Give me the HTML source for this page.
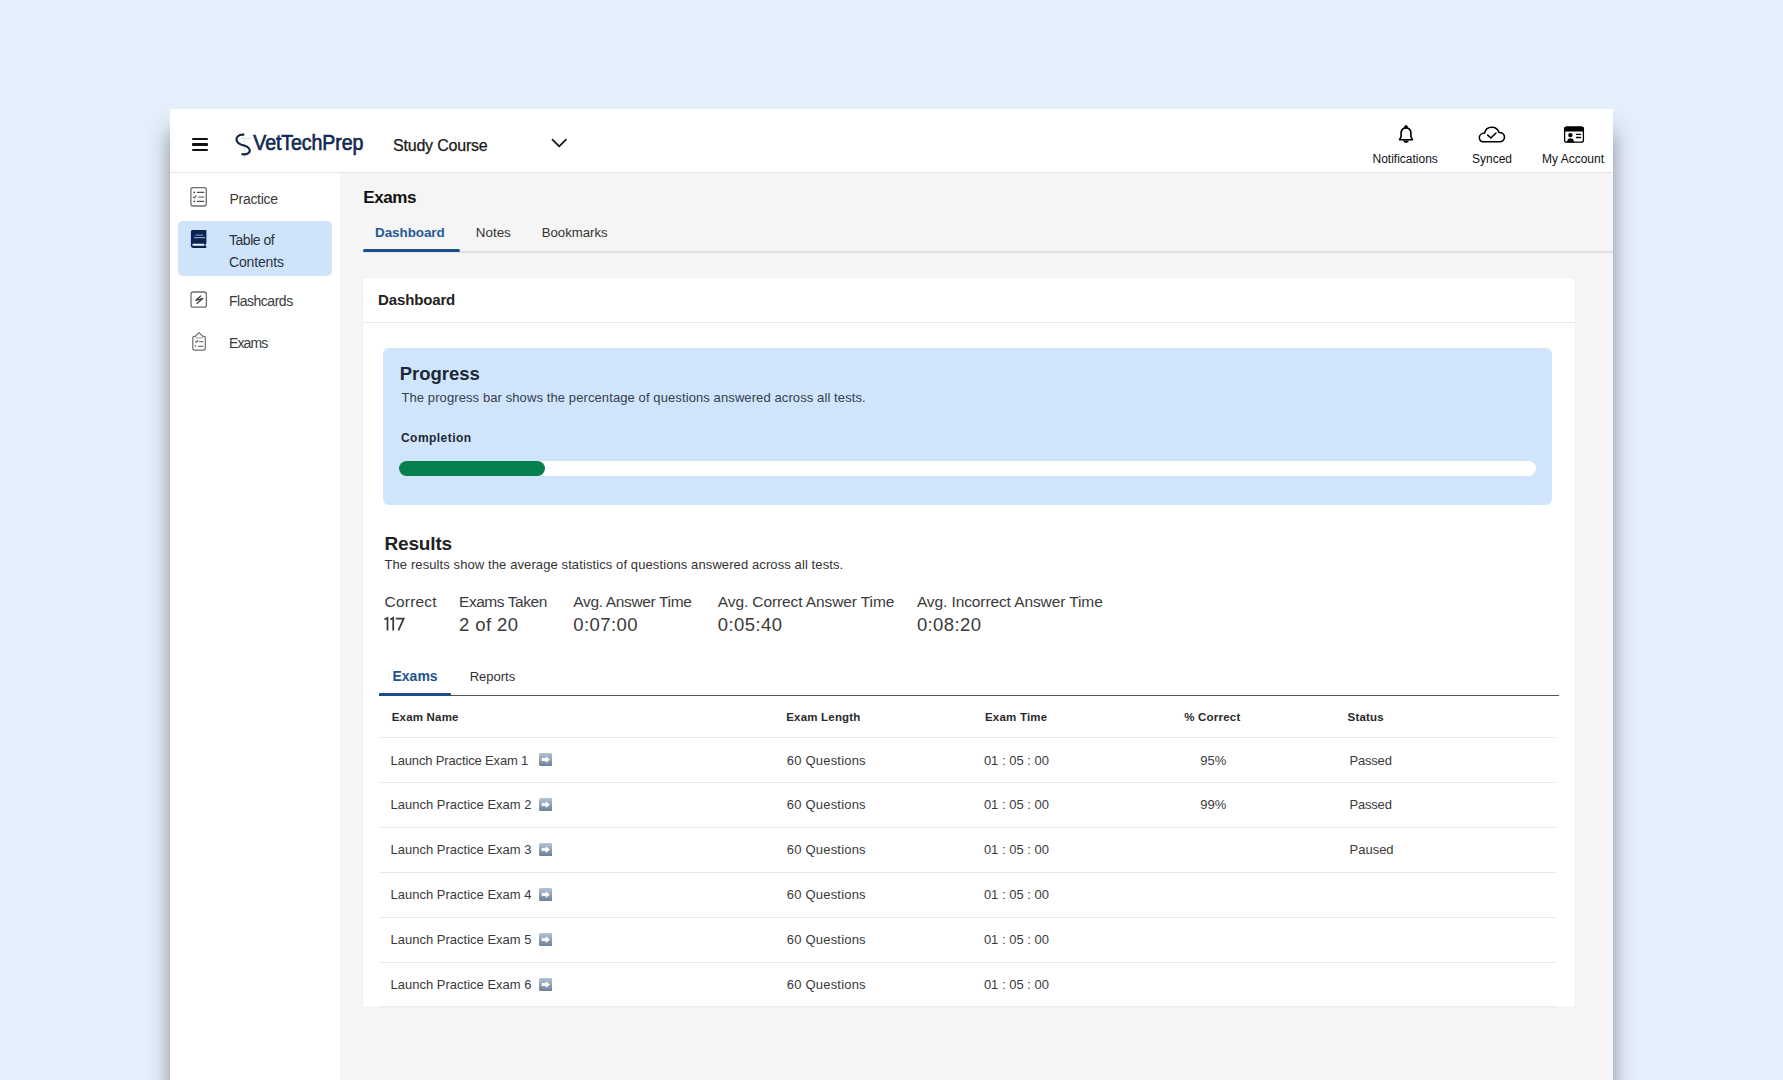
<!DOCTYPE html>
<html><head><meta charset="utf-8">
<style>
*{margin:0;padding:0;box-sizing:border-box}
html,body{width:1783px;height:1080px;overflow:hidden;background:#e5effb;font-family:"Liberation Sans",sans-serif;}
.a{position:absolute;white-space:nowrap;line-height:1}
#win{position:absolute;left:170px;top:109px;width:1443px;height:1000px;background:#fff;box-shadow:0 22px 20px rgba(0,5,15,0.42);overflow:hidden}
#hdr{position:absolute;left:0;top:0;width:1443px;height:64px;background:#fff;border-bottom:1px solid #e6e6e6}
#side{position:absolute;left:0;top:64px;width:170px;height:1000px;background:#fff}
#main{position:absolute;left:170px;top:64px;width:1273px;height:1000px;background:#f5f5f5}
.b{font-weight:bold}
</style></head><body>
<div id="win">
  <div id="hdr"></div>
  <div id="side"></div>
  <div id="main"></div>
</div>

<!-- HEADER -->
<div class="a" style="left:192px;top:138px;width:16px;height:2.4px;background:#111;border-radius:1px"></div>
<div class="a" style="left:192px;top:143.3px;width:16px;height:2.4px;background:#111;border-radius:1px"></div>
<div class="a" style="left:192px;top:148.6px;width:16px;height:2.4px;background:#111;border-radius:1px"></div>
<svg class="a" style="left:230px;top:125px" width="30" height="40" viewBox="230 125 30 40">
 <path d="M241 138.2 H251.5" stroke="#d6dae0" stroke-width="1.1"/>
 <path d="M244.5 139 V159" stroke="#dfe2e7" stroke-width="1.1"/>
 <path d="M243.5 134.6 C238.5 134.3 235.8 137.2 236.6 140.4 C237.4 143.4 240.8 144.6 244.2 145.6 C248.6 147 250.6 149.4 249.6 151.8 C248.6 153.9 245.4 154.6 242.2 154.2" fill="none" stroke="#0f2445" stroke-width="2.1" stroke-linecap="round"/>
</svg>
<div class="a" style="left:253.3px;top:131.9px;font-size:19.6px;color:#102a52;letter-spacing:-0.1px;-webkit-text-stroke:0.6px #102a52;transform:scaleY(1.12);transform-origin:0 0">VetTechPrep</div>
<div class="a" style="left:393px;top:137.5px;font-size:16px;color:#1a1a1a;letter-spacing:-0.2px;-webkit-text-stroke:0.25px #1a1a1a">Study Course</div>
<svg class="a" style="left:550px;top:136px" width="20" height="14" viewBox="0 0 20 14"><path d="M2.5 3.6 L9.2 10.4 L15.9 3.6" fill="none" stroke="#1a1a1a" stroke-width="1.8" stroke-linecap="round" stroke-linejoin="round"/></svg>

<svg class="a" style="left:1390px;top:118px" width="230" height="30" viewBox="1390 118 230 30">
 <path d="M1403.9 128.6 L1404.5 126.2 Q1406 123.9 1407.5 126.2 L1408.1 128.6 Z" fill="#000"/>
 <path d="M1399.6 139.7 L1401.1 136.6 L1401.1 133.6 C1401.1 129.9 1403.2 127.9 1406 127.9 C1408.8 127.9 1410.9 129.9 1410.9 133.6 L1410.9 136.6 L1412.4 139.7 Z" fill="none" stroke="#000" stroke-width="1.6" stroke-linejoin="round"/>
 <path d="M1403.2 140.4 C1403.5 143.6 1408.5 143.6 1408.8 140.4 Z" fill="#000"/>
 <path d="M1483 141.8 H1499.5 C1502.6 141.8 1504.5 139.7 1504.5 137.1 C1504.5 134.4 1502.3 132.4 1499.1 132.5 C1497.9 129 1495.2 127.2 1491.8 127.2 C1488.2 127.2 1485.4 129.4 1484.6 133 C1481.4 133.2 1479.3 135.3 1479.3 137.6 C1479.3 140 1481 141.8 1483 141.8 Z" fill="none" stroke="#000" stroke-width="1.6" stroke-linejoin="round"/>
 <path d="M1487.7 135.1 L1490.9 138 L1496 133" fill="none" stroke="#000" stroke-width="1.6" stroke-linecap="round" stroke-linejoin="round"/>
 <rect x="1564.6" y="127.2" width="18.8" height="15" rx="2" fill="none" stroke="#000" stroke-width="1.3"/>
 <path d="M1564 129.5 Q1564 126.6 1566.5 126.6 H1581.5 Q1584 126.6 1584 129.5 V131.6 H1564 Z" fill="#000"/>
 <circle cx="1570.4" cy="135.1" r="2.2" fill="#000"/>
 <path d="M1566.7 142.4 C1567.2 139.8 1568.5 138.2 1570.5 138.2 C1572.5 138.2 1573.8 139.8 1574.3 142.4 Z" fill="#000"/>
 <path d="M1576.5 134.4 H1580.6 M1576.5 137.5 H1580.6" stroke="#000" stroke-width="1.3" stroke-linecap="round"/>
</svg>
<div class="a" style="left:1372.5px;top:152.5px;font-size:12px;color:#111">Notifications</div>
<div class="a" style="left:1472px;top:152.5px;font-size:12px;color:#111">Synced</div>
<div class="a" style="left:1542px;top:152.5px;font-size:12px;color:#111">My Account</div>

<!-- SIDEBAR -->
<div class="a" style="left:178px;top:221px;width:154px;height:55px;background:#cfe3fb;border-radius:5px"></div>
<svg class="a" style="left:184px;top:180px" width="30" height="180" viewBox="184 180 30 180">
 <rect x="190.9" y="187.6" width="15.4" height="18.4" rx="2.2" fill="none" stroke="#6e6e6e" stroke-width="1.3"/>
 <circle cx="194.2" cy="192.4" r="0.9" fill="#444"/>
 <path d="M197.2 192.4 H203.8 M198.6 197 H203.8 M197.2 201.4 H203.8" stroke="#555" stroke-width="1.1" stroke-linecap="round"/>
 <path d="M193.4 197.2 L194.3 198 L196.2 195.6" fill="none" stroke="#555" stroke-width="1.1" stroke-linecap="round"/>
 <circle cx="194.2" cy="201.4" r="0.9" fill="#444"/>
 <path d="M192.3 230 H206.4 V243.4 L205.4 244.4 L206.6 247.9 H193.3 Q190.9 247.9 190.9 245.3 V231.6 Q190.9 230 192.3 230 Z" fill="#0b2450"/>
 <path d="M195.8 235.1 H202.8" stroke="#6c88b0" stroke-width="1.1" stroke-linecap="round"/>
 <path d="M194.4 237.7 H204.8" stroke="#b8cdee" stroke-width="0.9" stroke-linecap="round"/>
 <path d="M193.3 244.7 H203.5" stroke="#eaf4ff" stroke-width="2" stroke-linecap="round"/>
 <rect x="191" y="292" width="15.4" height="15.2" rx="2.2" fill="none" stroke="#6e6e6e" stroke-width="1.3"/>
 <path d="M200.7 296 L195.8 300.3 L202.8 298.5 L197 303.6" fill="none" stroke="#444" stroke-width="1.3" stroke-linecap="round" stroke-linejoin="round"/>
 <path d="M195.3 336.4 L199 332.6 L202.9 336.4 H204 Q205.3 336.4 205.3 337.8 V348.6 Q205.3 350.2 203.6 350.2 H194.5 Q192.8 350.2 192.8 348.6 V337.8 Q192.8 336.4 194.2 336.4 Z" fill="none" stroke="#6e6e6e" stroke-width="1.2" stroke-linejoin="round"/>
 <path d="M195.4 337.8 H202.8" stroke="#9a9a9a" stroke-width="1"/>
 <path d="M195.6 341.6 L196.4 342.2 L197.8 340.6 M199.4 341.7 H202.8 M198.4 346.2 H202.8" fill="none" stroke="#555" stroke-width="1.1" stroke-linecap="round"/>
 <circle cx="195.5" cy="346" r="0.8" fill="#555"/>
</svg>
<div class="a" style="left:229.5px;top:191.9px;font-size:14px;color:#3a3a3a;letter-spacing:-0.3px">Practice</div>
<div class="a" style="left:229px;top:233.4px;font-size:14px;color:#2a3340;letter-spacing:-0.47px">Table of</div>
<div class="a" style="left:229px;top:255.1px;font-size:14px;color:#2a3340;letter-spacing:-0.15px">Contents</div>
<div class="a" style="left:229px;top:294.2px;font-size:14px;color:#3a3a3a;letter-spacing:-0.48px">Flashcards</div>
<div class="a" style="left:229px;top:335.9px;font-size:14px;color:#3a3a3a;letter-spacing:-0.9px">Exams</div>

<!-- MAIN -->
<div class="a" style="left:363.2px;top:188.50px;font-size:17px;color:#111;letter-spacing:-0.4px;font-weight:bold;">Exams</div>
<div class="a" style="left:375.1px;top:226.25px;font-size:13.4px;color:#1f5a9a;letter-spacing:-0.05px;font-weight:bold;">Dashboard</div>
<div class="a" style="left:475.8px;top:226.15px;font-size:13.4px;color:#333;letter-spacing:0px;">Notes</div>
<div class="a" style="left:541.7px;top:226.32px;font-size:13.2px;color:#333;letter-spacing:0px;">Bookmarks</div>
<div class="a" style="left:363px;top:251.4px;width:1250px;height:1.2px;background:#e2e2e2"></div>
<div class="a" style="left:362.5px;top:249.2px;width:97.7px;height:2.8px;background:#1a4f8c;border-radius:2px"></div>
<div class="a" style="left:363px;top:278px;width:1212px;height:729px;background:#fff;border-radius:3px;box-shadow:0 0 2px rgba(0,0,0,0.07)"></div>
<div class="a" style="left:378.1px;top:292.10px;font-size:15px;color:#222;letter-spacing:-0.15px;font-weight:bold;">Dashboard</div>
<div class="a" style="left:363px;top:322px;width:1212px;height:1.3px;background:#e9e9e9"></div>
<div class="a" style="left:383px;top:347.5px;width:1169px;height:157.5px;background:#d0e4fb;border-radius:6px"></div>
<div class="a" style="left:399.7px;top:364.5px;font-size:18.5px;color:#1e2936;letter-spacing:0px;font-weight:bold;">Progress</div>
<div class="a" style="left:401.4px;top:390.59px;font-size:13px;color:#34404c;letter-spacing:0.1px;">The progress bar shows the percentage of questions answered across all tests.</div>
<div class="a" style="left:401px;top:431.6px;font-size:12px;color:#1e2936;letter-spacing:0.45px;font-weight:bold;">Completion</div>
<div class="a" style="left:399px;top:460.7px;width:1137px;height:15.8px;background:#fff;border-radius:8px"></div>
<div class="a" style="left:399px;top:460.7px;width:146px;height:15.8px;background:#06804f;border-radius:8px"></div>
<div class="a" style="left:384.4px;top:533.61px;font-size:19px;color:#222;letter-spacing:-0.15px;font-weight:bold;">Results</div>
<div class="a" style="left:384.5px;top:558.19px;font-size:13px;color:#333;letter-spacing:0.1px;">The results show the average statistics of questions answered across all tests.</div>
<div class="a" style="left:384.6px;top:594.3px;font-size:15.5px;color:#3a3a3a;letter-spacing:0.2px;">Correct</div>
<svg class="a" style="left:380px;top:614px" width="30" height="20" viewBox="380 614 30 20"><path d="M384.5 619.6 L387.5 617.9 V630.4 M390.3 619.6 L393.2 617.9 V630.4 M395.8 618.5 H403.7 L398.4 630.4" fill="none" stroke="#3a3a3a" stroke-width="1.75" stroke-linejoin="miter"/></svg>
<div class="a" style="left:459px;top:594.3px;font-size:15.5px;color:#3a3a3a;letter-spacing:-0.45px;">Exams Taken</div>
<div class="a" style="left:459px;top:616.0px;font-size:18.5px;color:#3a3a3a;letter-spacing:0.4px;">2 of 20</div>
<div class="a" style="left:573.3px;top:594.3px;font-size:15.5px;color:#3a3a3a;letter-spacing:-0.35px;">Avg. Answer Time</div>
<div class="a" style="left:573.3px;top:616.0px;font-size:18.5px;color:#3a3a3a;letter-spacing:0.4px;">0:07:00</div>
<div class="a" style="left:717.8px;top:594.3px;font-size:15.5px;color:#3a3a3a;letter-spacing:-0.1px;">Avg. Correct Answer Time</div>
<div class="a" style="left:717.8px;top:616.0px;font-size:18.5px;color:#3a3a3a;letter-spacing:0.4px;">0:05:40</div>
<div class="a" style="left:916.9px;top:594.3px;font-size:15.5px;color:#3a3a3a;letter-spacing:-0.1px;">Avg. Incorrect Answer Time</div>
<div class="a" style="left:916.9px;top:616.0px;font-size:18.5px;color:#3a3a3a;letter-spacing:0.4px;">0:08:20</div>
<div class="a" style="left:392.5px;top:669.2px;font-size:14px;color:#22528f;letter-spacing:0px;font-weight:bold;">Exams</div>
<div class="a" style="left:469.7px;top:669.99px;font-size:13px;color:#333;letter-spacing:0px;">Reports</div>
<div class="a" style="left:379px;top:694.6px;width:1180px;height:1.8px;background:#555"></div>
<div class="a" style="left:379px;top:693px;width:72.3px;height:2.8px;background:#1c4f8a;border-radius:1px"></div>
<div class="a" style="left:391.7px;top:712.26px;font-size:11.5px;color:#2a2a2a;letter-spacing:0.2px;font-weight:bold;">Exam Name</div>
<div class="a" style="left:786.2px;top:712.26px;font-size:11.5px;color:#2a2a2a;letter-spacing:0.2px;font-weight:bold;">Exam Length</div>
<div class="a" style="left:985px;top:712.26px;font-size:11.5px;color:#2a2a2a;letter-spacing:0.2px;font-weight:bold;">Exam Time</div>
<div class="a" style="left:1184.3px;top:712.26px;font-size:11.5px;color:#2a2a2a;letter-spacing:0.2px;font-weight:bold;">% Correct</div>
<div class="a" style="left:1347.6px;top:712.26px;font-size:11.5px;color:#2a2a2a;letter-spacing:0.2px;font-weight:bold;">Status</div>
<div class="a" style="left:379px;top:736.95px;width:1177px;height:1.5px;background:#e9e9e9"></div>
<div class="a" style="left:379px;top:781.95px;width:1177px;height:1.5px;background:#e9e9e9"></div>
<div class="a" style="left:379px;top:826.85px;width:1177px;height:1.5px;background:#e9e9e9"></div>
<div class="a" style="left:379px;top:871.75px;width:1177px;height:1.5px;background:#e9e9e9"></div>
<div class="a" style="left:379px;top:916.65px;width:1177px;height:1.5px;background:#e9e9e9"></div>
<div class="a" style="left:379px;top:961.65px;width:1177px;height:1.5px;background:#e9e9e9"></div>
<div class="a" style="left:379px;top:1005.8px;width:1177px;height:1.5px;background:#ececec"></div>
<div class="a" style="left:390.6px;top:753.59px;font-size:13px;color:#3a3a3a;letter-spacing:-0.15px;">Launch Practice Exam 1</div>
<svg class="a" style="left:538.6px;top:753.20px" width="13.6" height="13.2" viewBox="0 0 14 13.5"><defs><linearGradient id="g0" x1="0" y1="0" x2="0" y2="1"><stop offset="0" stop-color="#b3c4d4"/><stop offset="1" stop-color="#6d8196"/></linearGradient></defs><rect x="0" y="0" width="14" height="13.5" rx="2" fill="url(#g0)"/><path d="M2.8 5.2 H7 V3.2 L11.2 6.75 L7 10.3 V8.3 H2.8 Z" fill="#fff"/></svg>
<div class="a" style="left:786.8px;top:753.59px;font-size:13px;color:#3a3a3a;letter-spacing:0.2px;">60 Questions</div>
<div class="a" style="left:983.9px;top:753.59px;font-size:13px;color:#3a3a3a;letter-spacing:0px;">01 : 05 : 00</div>
<div class="a" style="left:1200.3px;top:753.59px;font-size:13px;color:#3a3a3a;letter-spacing:0px;">95%</div>
<div class="a" style="left:1349.5px;top:753.59px;font-size:13px;color:#3a3a3a;letter-spacing:-0.2px;">Passed</div>
<div class="a" style="left:390.6px;top:798.49px;font-size:13px;color:#3a3a3a;letter-spacing:0px;">Launch Practice Exam 2</div>
<svg class="a" style="left:538.6px;top:798.10px" width="13.6" height="13.2" viewBox="0 0 14 13.5"><defs><linearGradient id="g1" x1="0" y1="0" x2="0" y2="1"><stop offset="0" stop-color="#b3c4d4"/><stop offset="1" stop-color="#6d8196"/></linearGradient></defs><rect x="0" y="0" width="14" height="13.5" rx="2" fill="url(#g1)"/><path d="M2.8 5.2 H7 V3.2 L11.2 6.75 L7 10.3 V8.3 H2.8 Z" fill="#fff"/></svg>
<div class="a" style="left:786.8px;top:798.49px;font-size:13px;color:#3a3a3a;letter-spacing:0.2px;">60 Questions</div>
<div class="a" style="left:983.9px;top:798.49px;font-size:13px;color:#3a3a3a;letter-spacing:0px;">01 : 05 : 00</div>
<div class="a" style="left:1200.3px;top:798.49px;font-size:13px;color:#3a3a3a;letter-spacing:0px;">99%</div>
<div class="a" style="left:1349.5px;top:798.49px;font-size:13px;color:#3a3a3a;letter-spacing:-0.2px;">Passed</div>
<div class="a" style="left:390.6px;top:843.39px;font-size:13px;color:#3a3a3a;letter-spacing:0px;">Launch Practice Exam 3</div>
<svg class="a" style="left:538.6px;top:843.00px" width="13.6" height="13.2" viewBox="0 0 14 13.5"><defs><linearGradient id="g2" x1="0" y1="0" x2="0" y2="1"><stop offset="0" stop-color="#b3c4d4"/><stop offset="1" stop-color="#6d8196"/></linearGradient></defs><rect x="0" y="0" width="14" height="13.5" rx="2" fill="url(#g2)"/><path d="M2.8 5.2 H7 V3.2 L11.2 6.75 L7 10.3 V8.3 H2.8 Z" fill="#fff"/></svg>
<div class="a" style="left:786.8px;top:843.39px;font-size:13px;color:#3a3a3a;letter-spacing:0.2px;">60 Questions</div>
<div class="a" style="left:983.9px;top:843.39px;font-size:13px;color:#3a3a3a;letter-spacing:0px;">01 : 05 : 00</div>
<div class="a" style="left:1349.5px;top:843.39px;font-size:13px;color:#3a3a3a;letter-spacing:0px;">Paused</div>
<div class="a" style="left:390.6px;top:888.29px;font-size:13px;color:#3a3a3a;letter-spacing:0px;">Launch Practice Exam 4</div>
<svg class="a" style="left:538.6px;top:887.90px" width="13.6" height="13.2" viewBox="0 0 14 13.5"><defs><linearGradient id="g3" x1="0" y1="0" x2="0" y2="1"><stop offset="0" stop-color="#b3c4d4"/><stop offset="1" stop-color="#6d8196"/></linearGradient></defs><rect x="0" y="0" width="14" height="13.5" rx="2" fill="url(#g3)"/><path d="M2.8 5.2 H7 V3.2 L11.2 6.75 L7 10.3 V8.3 H2.8 Z" fill="#fff"/></svg>
<div class="a" style="left:786.8px;top:888.29px;font-size:13px;color:#3a3a3a;letter-spacing:0.2px;">60 Questions</div>
<div class="a" style="left:983.9px;top:888.29px;font-size:13px;color:#3a3a3a;letter-spacing:0px;">01 : 05 : 00</div>
<div class="a" style="left:390.6px;top:933.19px;font-size:13px;color:#3a3a3a;letter-spacing:0px;">Launch Practice Exam 5</div>
<svg class="a" style="left:538.6px;top:932.80px" width="13.6" height="13.2" viewBox="0 0 14 13.5"><defs><linearGradient id="g4" x1="0" y1="0" x2="0" y2="1"><stop offset="0" stop-color="#b3c4d4"/><stop offset="1" stop-color="#6d8196"/></linearGradient></defs><rect x="0" y="0" width="14" height="13.5" rx="2" fill="url(#g4)"/><path d="M2.8 5.2 H7 V3.2 L11.2 6.75 L7 10.3 V8.3 H2.8 Z" fill="#fff"/></svg>
<div class="a" style="left:786.8px;top:933.19px;font-size:13px;color:#3a3a3a;letter-spacing:0.2px;">60 Questions</div>
<div class="a" style="left:983.9px;top:933.19px;font-size:13px;color:#3a3a3a;letter-spacing:0px;">01 : 05 : 00</div>
<div class="a" style="left:390.6px;top:978.09px;font-size:13px;color:#3a3a3a;letter-spacing:0px;">Launch Practice Exam 6</div>
<svg class="a" style="left:538.6px;top:977.70px" width="13.6" height="13.2" viewBox="0 0 14 13.5"><defs><linearGradient id="g5" x1="0" y1="0" x2="0" y2="1"><stop offset="0" stop-color="#b3c4d4"/><stop offset="1" stop-color="#6d8196"/></linearGradient></defs><rect x="0" y="0" width="14" height="13.5" rx="2" fill="url(#g5)"/><path d="M2.8 5.2 H7 V3.2 L11.2 6.75 L7 10.3 V8.3 H2.8 Z" fill="#fff"/></svg>
<div class="a" style="left:786.8px;top:978.09px;font-size:13px;color:#3a3a3a;letter-spacing:0.2px;">60 Questions</div>
<div class="a" style="left:983.9px;top:978.09px;font-size:13px;color:#3a3a3a;letter-spacing:0px;">01 : 05 : 00</div>
</body></html>
